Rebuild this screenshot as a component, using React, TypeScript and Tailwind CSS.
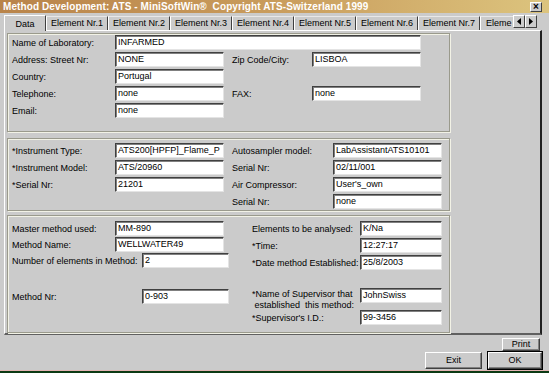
import React from "react";

const Box = ({ w, v }: { w: string; v: string }) => (
  <div
    className={`${w} h-[15px] shrink-0 bg-white border border-t-[#404040] border-l-[#404040] border-r-[#e4e4e4] border-b-[#e4e4e4] shadow-[inset_1px_1px_0_#808080] pl-[2px] text-[9px] leading-[13px] overflow-hidden whitespace-nowrap`}
  >
    {v}
  </div>
);

const Label = ({ w, t }: { w: string; t: string }) => (
  <span className={`${w} shrink-0 pt-[2px] text-[9px] leading-[11px] whitespace-nowrap`}>{t}</span>
);

const Group = ({ h, pt, children }: { h: string; pt: string; children: React.ReactNode }) => (
  <div
    className={`${h} ${pt} w-[443px] pl-[4px] border border-[#9a9a8c] shadow-[inset_1px_1px_0_#f2f2e6,1px_1px_0_#f2f2e6]`}
  >
    {children}
  </div>
);

const Btn = ({ w, h, t, def }: { w: string; h: string; t: string; def?: boolean }) => (
  <div className={`${def ? "border border-black" : ""}`}>
    <div
      className={`${w} ${h} flex items-center justify-center text-[9px] bg-[#cbcbcb] border border-t-white border-l-white border-r-[#404040] border-b-[#404040] shadow-[inset_-1px_-1px_0_#808080]`}
    >
      {t}
    </div>
  </div>
);

const tabs = ["Element Nr.1", "Element Nr.2", "Element Nr.3", "Element Nr.4", "Element Nr.5", "Element Nr.6", "Element Nr.7"];

export default function App() {
  return (
    <div className="w-[549px] h-[373px] bg-[#cbcbcb] flex flex-col overflow-hidden font-['Liberation_Sans',Arial,sans-serif] text-black">
      {/* title bar */}
      <div className="h-[13px] shrink-0 flex items-center justify-between bg-gradient-to-r from-[#b9844a] via-[#c99c5c] to-[#dcc47e] pl-[3px] pr-[7px]">
        <span className="text-[10px] font-bold text-white leading-none tracking-[0.1px] whitespace-pre">
          Method Development: ATS - MiniSoftWin®  Copyright ATS-Switzerland 1999
        </span>
        <div className="w-[12px] h-[10px] flex items-center justify-center bg-[#cbcbcb] border border-t-white border-l-white border-r-[#404040] border-b-[#404040] text-[10px] font-bold leading-none">
          ×
        </div>
      </div>

      {/* tabs */}
      <div className="h-[17px] shrink-0 flex items-end pl-[4px] relative z-10">
        <div className="w-[42px] h-[16px] -mb-[1px] bg-[#cbcbcb] border-t border-l border-r border-t-white border-l-white border-r-[#404040] flex items-start justify-center pt-[2px] text-[9px]">
          Data
        </div>
        {tabs.map((t) => (
          <div
            key={t}
            className="w-[62px] h-[14px] border-t border-l border-r border-t-[#e8e8e8] border-l-white border-r-[#404040] flex items-center justify-center text-[9px] whitespace-nowrap"
          >
            {t}
          </div>
        ))}
        <div className="w-[33px] h-[14px] border-t border-l border-t-[#e8e8e8] border-l-white overflow-hidden flex items-center pl-[5px] text-[9px] whitespace-nowrap">
          Eleme
        </div>
        <div className="flex self-start mt-[2px]">
          <div className="w-[12px] h-[13px] flex items-center justify-center border border-t-white border-l-white border-r-[#404040] border-b-[#404040]">
            <svg width="4" height="7" viewBox="0 0 4 7"><path d="M4 0 L0 3.5 L4 7 Z" fill="#000" /></svg>
          </div>
          <div className="w-[12px] h-[13px] flex items-center justify-center border border-t-white border-l-white border-r-[#404040] border-b-[#404040]">
            <svg width="4" height="7" viewBox="0 0 4 7"><path d="M0 0 L4 3.5 L0 7 Z" fill="#000" /></svg>
          </div>
        </div>
      </div>

      {/* panel */}
      <div className="ml-[4px] w-[538px] h-[305px] shrink-0 border-t border-l border-t-white border-l-white border-r-2 border-b-2 border-r-[#202020] border-b-[#606060] pl-[2px] pt-[2px] flex flex-col">
        <Group h="h-[99px]" pt="pt-[1px]">
          <div className="flex flex-col gap-[2px]">
            <div className="flex items-center h-[15px]">
              <Label w="w-[103px]" t="Name of Laboratory:" />
              <Box w="w-[306px]" v="INFARMED" />
            </div>
            <div className="flex items-center h-[15px]">
              <Label w="w-[103px]" t="Address: Street Nr:" />
              <Box w="w-[109px]" v="NONE" />
              <span className="w-[8px]" />
              <Label w="w-[80px]" t="Zip Code/City:" />
              <Box w="w-[109px]" v="LISBOA" />
            </div>
            <div className="flex items-center h-[15px]">
              <Label w="w-[103px]" t="Country:" />
              <Box w="w-[109px]" v="Portugal" />
            </div>
            <div className="flex items-center h-[15px]">
              <Label w="w-[103px]" t="Telephone:" />
              <Box w="w-[109px]" v="none" />
              <span className="w-[8px]" />
              <Label w="w-[80px]" t="FAX:" />
              <Box w="w-[109px]" v="none" />
            </div>
            <div className="flex items-center h-[15px]">
              <Label w="w-[103px]" t="Email:" />
              <Box w="w-[109px]" v="none" />
            </div>
          </div>
        </Group>

        <div className="h-[6px]" />

        <Group h="h-[73px]" pt="pt-[4px]">
          <div className="flex">
            <div className="w-[220px] flex flex-col gap-[2px]">
              <div className="flex items-center h-[15px]">
                <Label w="w-[103px]" t="*Instrument Type:" />
                <Box w="w-[109px]" v="ATS200[HPFP]_Flame_P" />
              </div>
              <div className="flex items-center h-[15px]">
                <Label w="w-[103px]" t="*Instrument Model:" />
                <Box w="w-[109px]" v="ATS/20960" />
              </div>
              <div className="flex items-center h-[15px]">
                <Label w="w-[103px]" t="*Serial Nr:" />
                <Box w="w-[109px]" v="21201" />
              </div>
            </div>
            <div className="flex flex-col gap-[2px]">
              <div className="flex items-center h-[15px]">
                <Label w="w-[101px]" t="Autosampler model:" />
                <Box w="w-[109px]" v="LabAssistantATS10101" />
              </div>
              <div className="flex items-center h-[15px]">
                <Label w="w-[101px]" t="Serial Nr:" />
                <Box w="w-[109px]" v="02/11/001" />
              </div>
              <div className="flex items-center h-[15px]">
                <Label w="w-[101px]" t="Air Compressor:" />
                <Box w="w-[109px]" v="User's_own" />
              </div>
              <div className="flex items-center h-[15px]">
                <Label w="w-[101px]" t="Serial Nr:" />
                <Box w="w-[109px]" v="none" />
              </div>
            </div>
          </div>
        </Group>

        <div className="h-[4px]" />

        <Group h="h-[118px]" pt="pt-[5px]">
          <div className="flex">
            <div className="w-[240px] flex flex-col gap-[1px]">
              <div className="flex items-center h-[15px]">
                <Label w="w-[103px]" t="Master method used:" />
                <Box w="w-[109px]" v="MM-890" />
              </div>
              <div className="flex items-center h-[15px]">
                <Label w="w-[103px]" t="Method Name:" />
                <Box w="w-[109px]" v="WELLWATER49" />
              </div>
              <div className="flex items-center h-[15px]">
                <Label w="w-[130px]" t="Number of elements in Method:" />
                <Box w="w-[87px]" v="2" />
              </div>
              <div className="flex items-center h-[15px] mt-[20px]">
                <Label w="w-[130px]" t="Method Nr:" />
                <Box w="w-[87px]" v="0-903" />
              </div>
            </div>
            <div className="flex flex-col gap-[2px]">
              <div className="flex items-center h-[15px]">
                <Label w="w-[108px]" t="Elements to be analysed:" />
                <Box w="w-[82px]" v="K/Na" />
              </div>
              <div className="flex items-center h-[15px]">
                <Label w="w-[108px]" t="*Time:" />
                <Box w="w-[82px]" v="12:27:17" />
              </div>
              <div className="flex items-center h-[15px]">
                <Label w="w-[108px]" t="*Date method Established:" />
                <Box w="w-[82px]" v="25/8/2003" />
              </div>
              <div className="flex items-start h-[20px] mt-[16px]">
                <span className="w-[108px] shrink-0 pt-[1px] text-[9px] leading-[11px] whitespace-pre">
                  {"*Name of Supervisor that\n established  this method:"}
                </span>
                <Box w="w-[82px]" v="JohnSwiss" />
              </div>
              <div className="flex items-center h-[15px]">
                <Label w="w-[108px]" t="*Supervisor's I.D.:" />
                <Box w="w-[82px]" v="99-3456" />
              </div>
            </div>
          </div>
        </Group>
      </div>

      {/* buttons */}
      <div className="h-[35px] shrink-0 flex flex-col items-end">
        <div className="mt-[3px] mr-[9px]">
          <Btn w="w-[38px]" h="h-[13px]" t="Print" />
        </div>
        <div className="flex items-center gap-[5px] mr-[6px]">
          <Btn w="w-[57px]" h="h-[17px]" t="Exit" />
          <Btn w="w-[54px]" h="h-[17px]" t="OK" def />
        </div>
      </div>

      <div className="h-[1px] shrink-0 bg-[#e4b4b4]" />
      <div className="h-[2px] shrink-0 bg-[#0c3a14]" />
    </div>
  );
}
